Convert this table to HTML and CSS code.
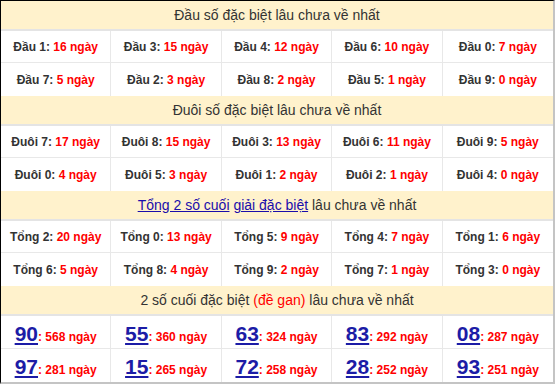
FILE: index.html
```html
<!DOCTYPE html>
<html lang="vi">
<head>
<meta charset="utf-8">
<link rel="stylesheet" href="styles.css">
</head>
<body>
<div class="board">
  <section class="sec">
    <div class="head"><span>Đầu số đặc biệt lâu chưa về nhất</span></div>
    <div class="grid">
      <div class="cell">Đầu 1: <span class="red">16 ngày</span></div>
      <div class="cell">Đầu 3: <span class="red">15 ngày</span></div>
      <div class="cell">Đầu 4: <span class="red">12 ngày</span></div>
      <div class="cell">Đầu 6: <span class="red">10 ngày</span></div>
      <div class="cell">Đầu 0: <span class="red">7 ngày</span></div>
      <div class="cell">Đầu 7: <span class="red">5 ngày</span></div>
      <div class="cell">Đầu 2: <span class="red">3 ngày</span></div>
      <div class="cell">Đầu 8: <span class="red">2 ngày</span></div>
      <div class="cell">Đầu 5: <span class="red">1 ngày</span></div>
      <div class="cell">Đầu 9: <span class="red">0 ngày</span></div>
    </div>
  </section>
  <section class="sec">
    <div class="head"><span>Đuôi số đặc biệt lâu chưa về nhất</span></div>
    <div class="grid">
      <div class="cell">Đuôi 7: <span class="red">17 ngày</span></div>
      <div class="cell">Đuôi 8: <span class="red">15 ngày</span></div>
      <div class="cell">Đuôi 3: <span class="red">13 ngày</span></div>
      <div class="cell">Đuôi 6: <span class="red">11 ngày</span></div>
      <div class="cell">Đuôi 9: <span class="red">5 ngày</span></div>
      <div class="cell">Đuôi 0: <span class="red">4 ngày</span></div>
      <div class="cell">Đuôi 5: <span class="red">3 ngày</span></div>
      <div class="cell">Đuôi 1: <span class="red">2 ngày</span></div>
      <div class="cell">Đuôi 2: <span class="red">1 ngày</span></div>
      <div class="cell">Đuôi 4: <span class="red">0 ngày</span></div>
    </div>
  </section>
  <section class="sec">
    <div class="head"><span><a class="link" href="#">Tổng 2 số cuối</a> <a class="link" href="#">giải đặc biệt</a> lâu chưa về nhất</span></div>
    <div class="grid">
      <div class="cell">Tổng 2: <span class="red">20 ngày</span></div>
      <div class="cell">Tổng 0: <span class="red">13 ngày</span></div>
      <div class="cell">Tổng 5: <span class="red">9 ngày</span></div>
      <div class="cell">Tổng 4: <span class="red">7 ngày</span></div>
      <div class="cell">Tổng 1: <span class="red">6 ngày</span></div>
      <div class="cell">Tổng 6: <span class="red">5 ngày</span></div>
      <div class="cell">Tổng 8: <span class="red">4 ngày</span></div>
      <div class="cell">Tổng 9: <span class="red">2 ngày</span></div>
      <div class="cell">Tổng 7: <span class="red">1 ngày</span></div>
      <div class="cell">Tổng 3: <span class="red">0 ngày</span></div>
    </div>
  </section>
  <section class="sec last">
    <div class="head"><span>2 số cuối đặc biệt <span class="red">(đề gan)</span> lâu chưa về nhất</span></div>
    <div class="grid">
      <div class="cell gan"><a class="num" href="#">90</a><span class="red">: 568 ngày</span></div>
      <div class="cell gan"><a class="num" href="#">55</a><span class="red">: 360 ngày</span></div>
      <div class="cell gan"><a class="num" href="#">63</a><span class="red">: 324 ngày</span></div>
      <div class="cell gan"><a class="num" href="#">83</a><span class="red">: 292 ngày</span></div>
      <div class="cell gan"><a class="num" href="#">08</a><span class="red">: 287 ngày</span></div>
      <div class="cell gan"><a class="num" href="#">97</a><span class="red">: 281 ngày</span></div>
      <div class="cell gan"><a class="num" href="#">15</a><span class="red">: 265 ngày</span></div>
      <div class="cell gan"><a class="num" href="#">72</a><span class="red">: 258 ngày</span></div>
      <div class="cell gan"><a class="num" href="#">28</a><span class="red">: 252 ngày</span></div>
      <div class="cell gan"><a class="num" href="#">93</a><span class="red">: 251 ngày</span></div>
    </div>
  </section>
</div>
</body>
</html>
```
FILE: styles.css
```css
* { box-sizing: border-box; }
html, body { margin: 0; padding: 0; background: #fff; }
body {
  font-family: Arial, "Liberation Sans", sans-serif;
  color: #333;
}
.board {
  width: 555px;
  height: 384px;
  border-top: 1px solid #000;
  border-left: 1px solid #000;
  border-right: 2px solid #c4c4c4;
  border-bottom: 2px solid #c4c4c4;
  display: flex;
  flex-direction: column;
  overflow: hidden;
}
.head {
  height: 30px;
  flex: none;
  background: #fff2cc;
  border-bottom: 2px solid #e4e4e4;
  display: flex;
  align-items: center;
  justify-content: center;
  font-size: 14px;
  color: #333;
}
.head > span { white-space: nowrap; }
.link {
  color: #1a0dab;
  text-decoration: underline;
}
.grid {
  display: grid;
  grid-template-columns: repeat(5, 1fr);
  grid-template-rows: 32px 33px;
}
.last .grid { grid-template-rows: 33px 33px; }
.cell {
  display: flex;
  align-items: center;
  justify-content: center;
  font-size: 12px;
  font-weight: bold;
  color: #333;
  border-right: 1px solid #e8e8e8;
  border-bottom: 1px solid #e8e8e8;
  white-space: pre;
}
.cell:nth-child(5n) { border-right: none; }
.cell:nth-child(n+6) { border-bottom: none; }
.red { color: #ff0000; }
.gan { align-items: baseline; padding-top: 5px; }
.gan .red { font-size: 12px; }
.num {
  font-size: 21px;
  font-weight: bold;
  color: #1c1ca6;
  text-decoration: underline;
  line-height: 26px;
}
```
